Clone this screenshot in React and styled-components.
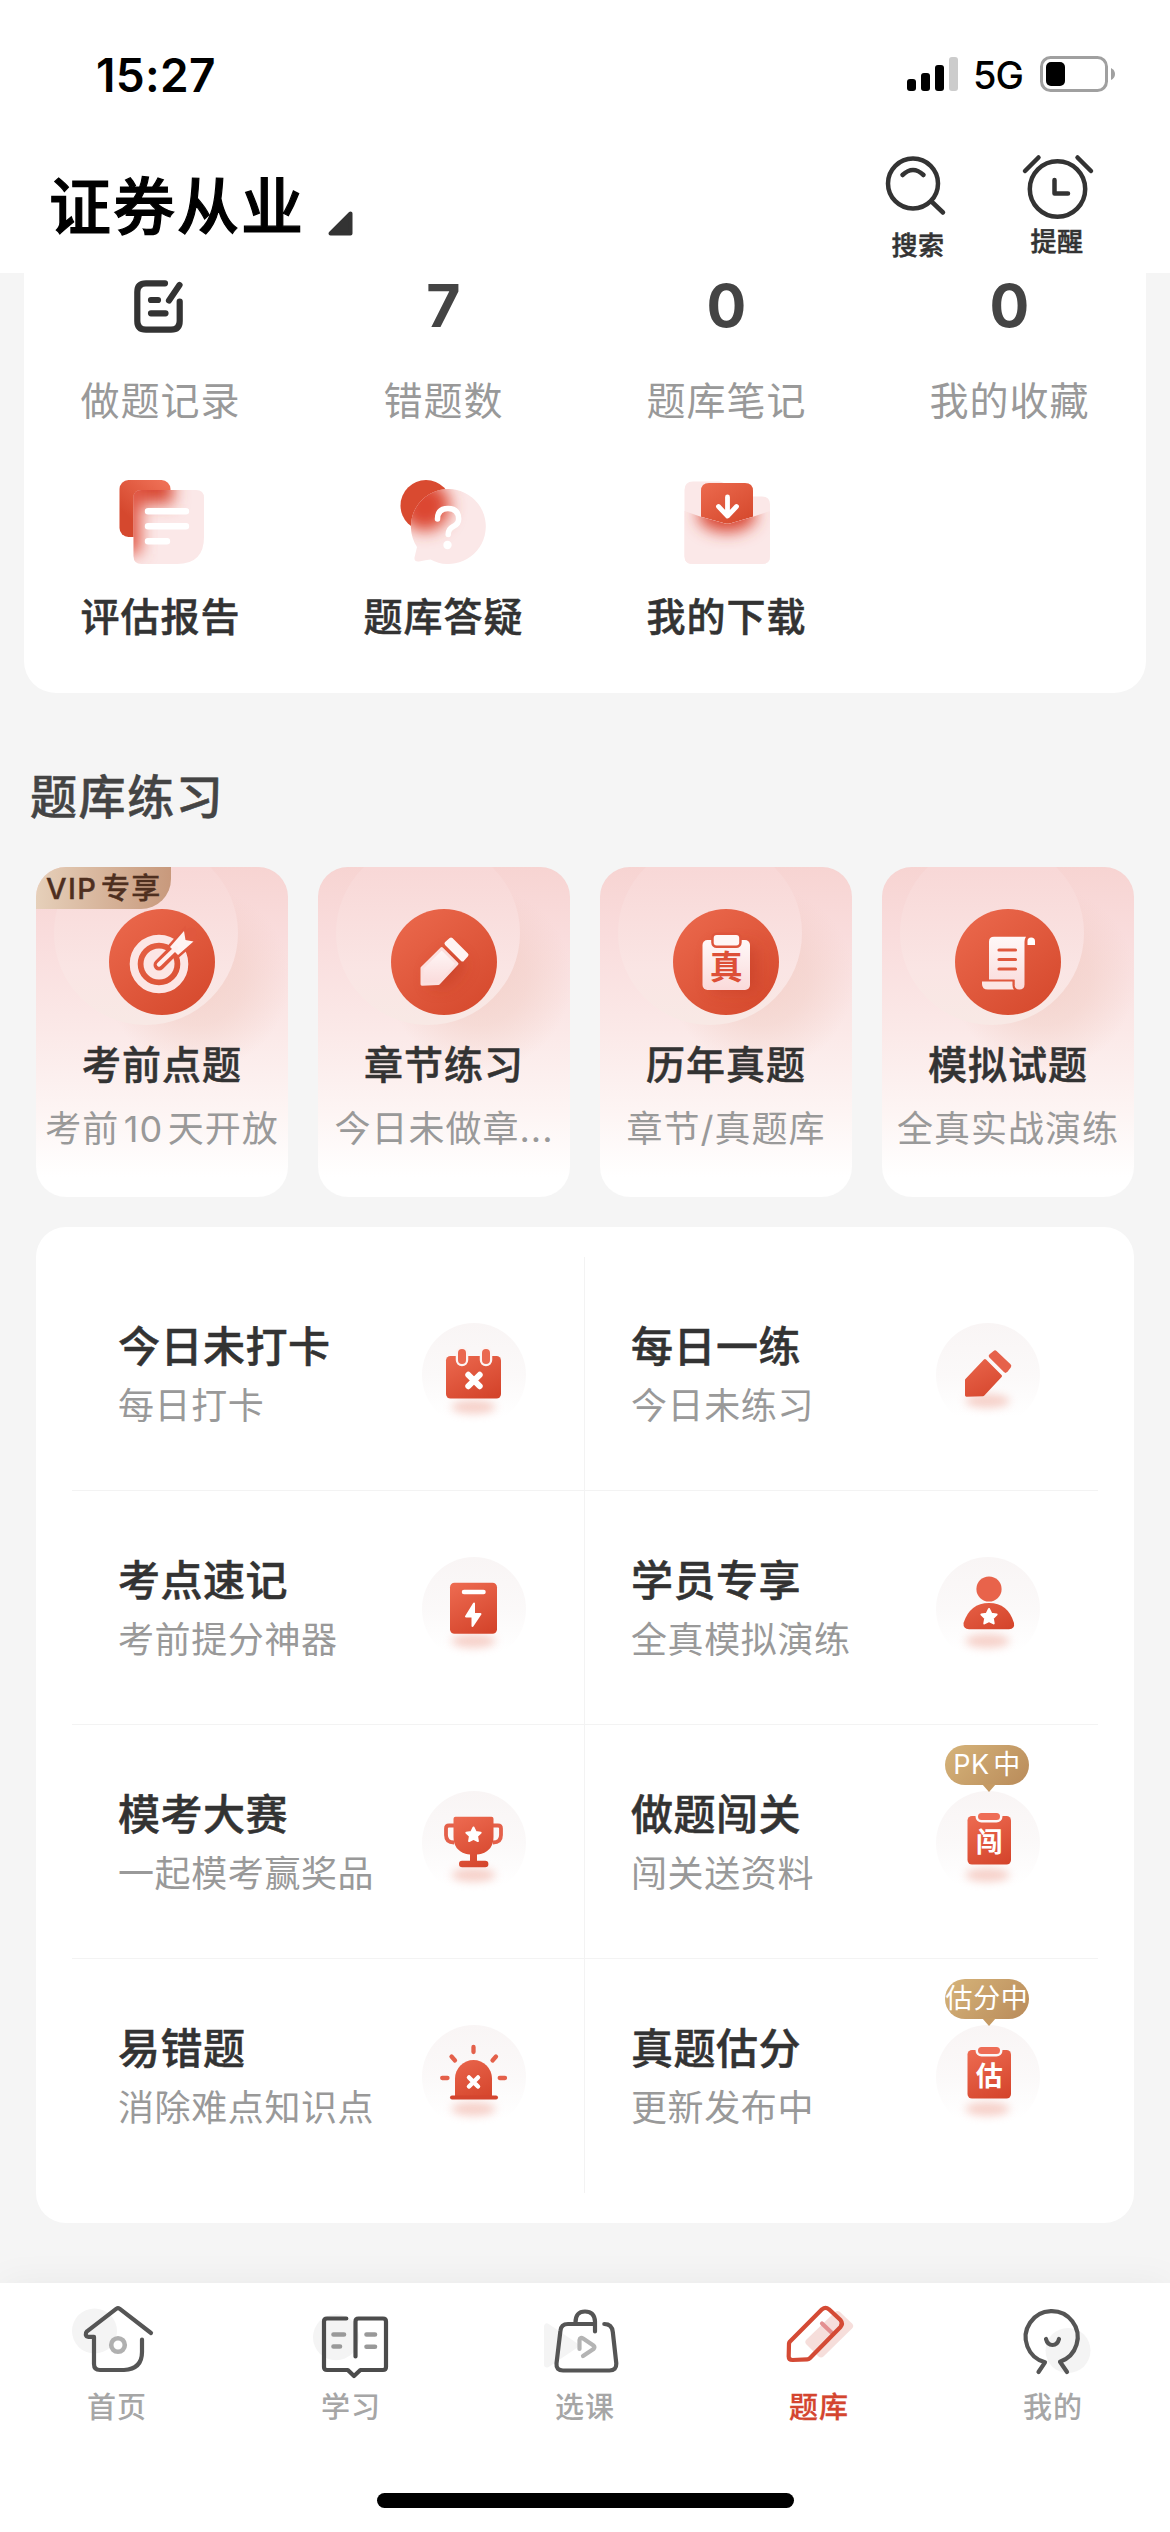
import React from 'react'
import styled, { createGlobalStyle, css } from 'styled-components'

const GlobalStyle = createGlobalStyle`
  * {
    box-sizing: border-box;
  }

  body {
    margin: 0;
    background: #f5f5f5;
    font-family: Inter, 'Noto Sans CJK SC', sans-serif;
    text-autospace: normal;
  }

  svg {
    display: block;
    flex: none;
    overflow: visible;
  }
`

/* sits between the medium and bold cuts of the CJK family */
const semibold = css`
  font-weight: 500;
  -webkit-text-stroke: 0.5px currentColor;
`

const Screen = styled.div`
  width: 1170px;
  height: 2532px;
  display: flex;
  flex-direction: column;
  overflow: hidden;
  background: #f5f5f5;
`

/* ---------- header ---------- */

const Header = styled.header`
  height: 273px;
  flex: none;
  background: #fff;
`

const StatusBar = styled.div`
  height: 148px;
  display: flex;
  align-items: center;
  justify-content: space-between;
  padding: 0 55px 0 96px;
`

const Time = styled.span`
  margin-top: 2px;
  font-size: 46px;
  font-weight: 600;
  letter-spacing: 0.3px;
  color: #000;
`

const Signals = styled.div`
  display: flex;
  align-items: center;
`

const Network = styled.span`
  margin: 2px 17px 0 14px;
  font-size: 38px;
  font-weight: 500;
  letter-spacing: -1px;
  color: #000;
`

const TitleBar = styled.div`
  display: flex;
  align-items: flex-start;
  padding: 2px 77px 0 49px;
`

const Title = styled.h1`
  ${semibold}
  margin: 23px 23px 0 0;
  font-size: 62px;
  line-height: 70px;
  letter-spacing: 2px;
  -webkit-text-stroke-width: 1.2px;
  color: #000;
`

const Caret = styled.svg`
  margin-top: 61px;
`

const Actions = styled.div`
  display: flex;
  gap: 67px;
  margin-left: auto;
`

const Action = styled.div`
  ${semibold}
  width: 72px;
  display: flex;
  flex-direction: column;
  align-items: center;
  gap: ${({ $gap }) => $gap}px;
  font-size: 26px;
  line-height: 30px;
  letter-spacing: 0.6px;
  color: #333;
`

/* ---------- statistics ---------- */

const StatsCard = styled.section`
  height: 420px;
  flex: none;
  margin: 0 24px;
  display: grid;
  grid-template-columns: repeat(4, 283px);
  grid-template-rows: 153px 1fr;
  justify-content: center;
  background: #fff;
  border-radius: 0 0 32px 32px;
`

const Stat = styled.div`
  display: flex;
  flex-direction: column;
  align-items: center;
`

const StatValue = styled.div`
  height: 65px;
  display: flex;
  align-items: center;
  font-size: 59px;
  font-weight: 700;
  color: #444;
`

const StatLabel = styled.div`
  margin-top: 38px;
  font-size: 39px;
  line-height: 50px;
  letter-spacing: 1px;
  color: #999;
`

const Tool = styled.div`
  display: flex;
  flex-direction: column;
  align-items: center;
  padding-top: 54px;
`

const ToolLabel = styled.div`
  ${semibold}
  margin-top: 28px;
  font-size: 39px;
  line-height: 50px;
  letter-spacing: 1px;
  color: #333;
`

/* ---------- practice cards ---------- */

const SectionTitle = styled.h2`
  ${semibold}
  margin: 74px 30px 0;
  font-size: 47px;
  line-height: 60px;
  letter-spacing: 1.6px;
  color: #444;
`

const Cards = styled.section`
  display: flex;
  gap: 30px;
  margin: 40px 36px 0;
`

const Card = styled.article`
  position: relative;
  isolation: isolate;
  width: 252px;
  height: 330px;
  display: flex;
  flex-direction: column;
  align-items: center;
  padding-top: 42px;
  overflow: hidden;
  border-radius: 30px;
  background:
    radial-gradient(
      circle 92px at 162px 112px,
      rgba(238, 196, 184, 0.5) 0,
      rgba(238, 196, 184, 0.36) 50%,
      rgba(242, 210, 202, 0) 100%
    ),
    linear-gradient(#f7d4d2 0%, #f9dcdc 20%, #fbe9e8 50%, #fdf5f4 75%, #fff 94%);

  /* pale halo behind the icon */
  &::before {
    content: '';
    position: absolute;
    z-index: -1;
    top: -26px;
    left: 18px;
    width: 184px;
    height: 184px;
    border-radius: 50%;
    background: linear-gradient(
      #f8d8d7 15%,
      #f9dedd 40%,
      #fae5e4 70%,
      #f8e9e5 100%
    );
  }
`

const VipTag = styled.span`
  position: absolute;
  top: 0;
  left: 0;
  width: 135px;
  height: 42px;
  padding-left: 10px;
  border-bottom-right-radius: 30px;
  background: linear-gradient(90deg, #e6d0ba, #c8997c);
  font-size: 29px;
  font-weight: 500;
  -webkit-text-stroke: 0.4px currentColor;
  line-height: 44px;
  letter-spacing: 1.4px;
  white-space: nowrap;
  color: #4e2f1f;
`

const CardTitle = styled.h3`
  ${semibold}
  margin: 25px 0 0;
  font-size: 39px;
  line-height: 50px;
  letter-spacing: 1px;
  color: #333;
`

const CardNote = styled.p`
  margin: 17px 0 0;
  font-size: 36px;
  line-height: 44px;
  letter-spacing: 1px;
  white-space: nowrap;
  color: #999;
`

/* ---------- feature list ---------- */

const Features = styled.section`
  height: 996px;
  flex: none;
  display: grid;
  grid-template-columns: 513px 513px;
  grid-template-rows: repeat(4, 234px);
  margin: 30px 36px 0;
  padding: 30px 36px;
  background: #fff;
  border-radius: 30px;
`

const Feature = styled.div`
  display: flex;
  justify-content: space-between;
  padding: 65px 58px 0 46px;
  ${({ $line }) =>
    $line &&
    css`
      border-bottom: 1px solid #f3f3f3;
    `}

  &:nth-child(odd) {
    border-right: 1px solid #f3f3f3;
  }
`

const FeatureTitle = styled.h3`
  ${semibold}
  margin: 0;
  font-size: 42px;
  line-height: 50px;
  letter-spacing: 0.5px;
  color: #333;
`

const FeatureNote = styled.p`
  margin: 11px 0 0;
  font-size: 36px;
  line-height: 46px;
  letter-spacing: 0.6px;
  color: #999;
`

const FeatureIcon = styled.div`
  position: relative;
  width: 104px;
  height: 104px;
  margin-top: 1px;
  border-radius: 50%;
  background: linear-gradient(#f9f5f5, #fbf9f9 50%, #fff 90%);
`

const Bubble = styled.span`
  position: absolute;
  top: -46px;
  left: 9px;
  width: 84px;
  height: 40px;
  border-radius: 20px;
  background: linear-gradient(135deg, #d6b47a, #b98b5a);
  font-size: 27px;
  font-weight: 400;
  line-height: 40px;
  letter-spacing: 0.6px;
  text-align: center;
  white-space: nowrap;
  color: #fff;

  &::after {
    content: '';
    position: absolute;
    top: 39px;
    left: 37px;
    border: 7px solid transparent;
    border-top: 8px solid #c59a64;
    border-bottom: 0;
  }
`

/* ---------- tab bar ---------- */

const TabBar = styled.nav`
  position: relative;
  height: 249px;
  flex: none;
  margin-top: auto;
  display: grid;
  grid-template-columns: repeat(5, 1fr);
  background: #fff;
  box-shadow: 0 0 36px rgba(0, 0, 0, 0.05);
`

const Tab = styled.div`
  display: flex;
  flex-direction: column;
  align-items: center;
  padding-top: 17px;
  font-size: 29px;
  font-weight: 500;
  line-height: 40px;
  letter-spacing: 1px;
  color: ${({ $active }) => ($active ? '#d4452f' : '#a6a6a6')};
  ${({ $active }) =>
    $active &&
    css`
      -webkit-text-stroke: 0.3px currentColor;
    `}

  span {
    margin-top: 8px;
  }
`

const HomeIndicator = styled.div`
  position: absolute;
  left: 377px;
  bottom: 24px;
  width: 417px;
  height: 15px;
  border-radius: 8px;
  background: #000;
`

/* ---------- icons ---------- */

const star = (cx, cy, r) =>
  Array.from({ length: 10 }, (_, i) => {
    const a = (Math.PI / 5) * i - Math.PI / 2
    const d = i % 2 ? r * 0.5 : r
    return `${cx + d * Math.cos(a)},${cy + d * Math.sin(a)}`
  }).join(' ')

const HiddenSvg = styled.svg`
  position: absolute;
`

const Defs = () => (
  <HiddenSvg width="0" height="0">
    <defs>
      <linearGradient id="red" x1="0" y1="1" x2="0.8" y2="0">
        <stop offset="0.3" stopColor="#d5482e" />
        <stop offset="1" stopColor="#ee6f55" />
      </linearGradient>
      <linearGradient
        id="redBox"
        gradientUnits="userSpaceOnUse"
        x1="35"
        y1="22"
        x2="62"
        y2="78"
      >
        <stop offset="0" stopColor="#ee6c52" />
        <stop offset="1" stopColor="#d4442b" />
      </linearGradient>
      <linearGradient id="disc" x1="0" y1="0" x2="0.8" y2="1">
        <stop offset="0" stopColor="#ec6a4e" />
        <stop offset="1" stopColor="#d64a2e" />
      </linearGradient>
      <linearGradient id="paper" x1="0" y1="0" x2="0" y2="1">
        <stop offset="0" stopColor="#fff8f8" />
        <stop offset="1" stopColor="#fadada" />
      </linearGradient>
      <filter id="soft" x="-50%" y="-50%" width="200%" height="200%">
        <feGaussianBlur stdDeviation="8" />
      </filter>
      <filter id="shade" x="-50%" y="-150%" width="200%" height="400%">
        <feGaussianBlur stdDeviation="4.5" />
      </filter>
      <clipPath id="sheet">
        <path d="M22.500 10H77q8 0 8 8V57q0 27-27 27H22.500q-8 0-8-8V18q0-8 8-8Z" />
      </clipPath>
      <clipPath id="chat">
        <path d="M46.500 9a37.500 37.500 0 1 1-18 70.500Q24 80 17 81.500q-5 .5-4.500-4L15 67A37.500 37.500 0 0 1 46.500 9Z" />
      </clipPath>
      <clipPath id="pocket">
        <path d="M-.5 31 15.800 36.700 40 43.500q2.500.6 5 0L68 36.700 85 31V76q0 8-8 8H7.500q-8 0-8-8Z" />
      </clipPath>
    </defs>
  </HiddenSvg>
)

const SignalIcon = () => (
  <svg width="52" height="36" viewBox="0 0 52 36">
    <rect x="0" y="23" width="9" height="12" rx="3" />
    <rect x="14" y="17" width="9" height="18" rx="3" />
    <rect x="28" y="9" width="9" height="26" rx="3" />
    <rect x="42" y="1" width="9" height="34" rx="3" fill="#ccc" />
  </svg>
)

const BatteryIcon = () => (
  <svg width="75" height="36" viewBox="0 0 75 36">
    <rect
      x="1.500"
      y="1.500"
      width="65"
      height="33"
      rx="9"
      fill="none"
      stroke="#a0a0a0"
      strokeWidth="3"
    />
    <path d="M71 12q4 2 4 6t-4 6Z" fill="#a0a0a0" />
    <rect x="6" y="6" width="19" height="24" rx="5" />
  </svg>
)

const SearchIcon = () => (
  <svg
    width="72"
    height="68"
    fill="none"
    stroke="#333"
    strokeWidth="4.500"
    strokeLinecap="round"
  >
    <circle cx="31" cy="33.500" r="25" />
    <path d="M20.500 25q10.500-10 21 0M49.500 51.500 61 62.500" />
  </svg>
)

const ClockIcon = () => (
  <svg
    width="72"
    height="68"
    fill="none"
    stroke="#333"
    strokeWidth="4.500"
    strokeLinecap="round"
    strokeLinejoin="round"
  >
    <circle cx="36.500" cy="39" r="27.700" />
    <path d="M33.500 30V43.500H47M4 21 17.500 7.500M56.500 7.500 70 21" />
  </svg>
)

const RecordIcon = () => (
  <svg
    width="54"
    height="51"
    fill="none"
    stroke="#333"
    strokeWidth="6.200"
    strokeLinecap="round"
    strokeLinejoin="round"
  >
    <path d="M31 3.300H12q-8.700 0-8.700 8.700V41q0 8.700 8.700 8.700H37q8.700 0 8.700-8.700V21.500" />
    <path d="M45.500 5 35 20.500M17 20h7M17 33.300h14.500" />
  </svg>
)

const ReportIcon = () => (
  <svg width="84" height="84">
    <rect x="0.500" y="0" width="51" height="57" rx="9" fill="url(#red)" />
    <g clipPath="url(#sheet)">
      <rect width="90" height="90" fill="#fbe8e8" />
      <rect x="-6" y="-14" width="60" height="38" fill="#d94a35" filter="url(#soft)" />
      <rect x="-12" y="-4" width="34" height="78" fill="#e25c48" filter="url(#soft)" />
    </g>
    <path
      d="M29 31.300H67M29 46.300H67M29 61.300H48"
      stroke="#fff"
      strokeWidth="6.400"
      strokeLinecap="round"
    />
  </svg>
)

const ChatIcon = () => (
  <svg width="84" height="84">
    <circle cx="24" cy="25.500" r="25.500" fill="#d94a30" />
    <g clipPath="url(#chat)">
      <rect width="90" height="90" fill="#fbe8e8" />
      <circle cx="23" cy="26" r="25" fill="#dc4630" filter="url(#soft)" />
    </g>
    <path
      d="M35.500 39q0-10.500 10.500-10.500T56.700 39q0 5-5.500 7.500-5 2.500-5 8"
      fill="none"
      stroke="#fff"
      strokeWidth="5.500"
      strokeLinecap="round"
    />
    <circle cx="45.500" cy="65" r="4.200" fill="#fff" />
  </svg>
)

const DownloadIcon = () => (
  <svg width="84" height="84">
    <path
      d="M8 1.500H34q6 0 9 7t9 8H77q8 0 8 8V76q0 8-8 8H7.500q-8 0-8-8V10q0-8.500 8.500-8.500Z"
      fill="#fbe8e8"
    />
    <path
      d="M24 3H60q8 0 8 8V36.700L45 43.500q-2.500.6-5 0L16 36.700V11q0-8 8-8Z"
      fill="url(#disc)"
    />
    <g clipPath="url(#pocket)">
      <rect x="-2" y="20" width="90" height="66" fill="#fbe8e8" />
      <ellipse cx="42" cy="35" rx="29" ry="17" fill="#d94430" filter="url(#soft)" />
    </g>
    <path
      d="M42.500 17V36M33.500 26.500l9 9.500 9-9.500"
      fill="none"
      stroke="#fff"
      strokeWidth="4.800"
      strokeLinecap="round"
      strokeLinejoin="round"
    />
  </svg>
)

const Disc = ({ children }) => (
  <svg width="106" height="106">
    <circle cx="53" cy="53" r="53" fill="url(#disc)" />
    {children}
  </svg>
)

const TargetIcon = () => (
  <Disc>
    <circle
      cx="50"
      cy="55"
      r="25.300"
      fill="none"
      stroke="#fce6e5"
      strokeWidth="8"
    />
    <circle cx="50" cy="55" r="15.500" fill="#fce6e5" />
    <path d="M50 56 82 24" stroke="#e0583e" strokeWidth="11" strokeLinecap="round" />
    <path
      d="M61 38 75 22 76.500 31 84.500 32.500 69 46Z"
      fill="#fff4f3"
      stroke="#e0583e"
      strokeWidth="5"
      paintOrder="stroke"
    />
    <path
      d="M50 55.500 67 39"
      stroke="#fff0ef"
      strokeWidth="4.500"
      strokeLinecap="round"
    />
  </Disc>
)

const ChapterIcon = () => (
  <Disc>
    <path
      d="M52 39 67 54.500 48.500 75H31V59Z"
      fill="#b9301c"
      opacity="0.5"
      filter="url(#soft)"
      transform="translate(8 2)"
    />
    <path
      d="M50.700 39.500 66 54.700 47.500 74.500 31 75.200V59Z"
      fill="url(#paper)"
      stroke="#fbe0df"
      strokeWidth="3"
      strokeLinejoin="round"
    />
    <path
      d="M60 30.500 55.500 34.500 71.500 50.500 75.500 46Z"
      fill="#fff4f3"
      stroke="#fff4f3"
      strokeWidth="4"
      strokeLinejoin="round"
    />
  </Disc>
)

const PaperIcon = () => (
  <Disc>
    <rect
      x="38"
      y="36"
      width="46"
      height="46"
      rx="5"
      fill="#b9301c"
      opacity="0.4"
      filter="url(#soft)"
    />
    <rect x="29.500" y="31" width="47.500" height="50" rx="5" fill="url(#paper)" />
    <rect
      x="40.700"
      y="26"
      width="25.500"
      height="10.500"
      rx="3"
      fill="#fff6f5"
      stroke="#de553c"
      strokeWidth="5"
      paintOrder="stroke"
    />
    <text
      x="53.300"
      y="70"
      textAnchor="middle"
      fontSize="33"
      fontWeight="700"
      fill="#dd4f37"
    >
      真
    </text>
  </Disc>
)

const ScrollIcon = () => (
  <Disc>
    <path
      d="M39 27.700H71q-1.500 2-1.500 5V75.500q0 5-5.200 5-4.800 0-4.800-5.500V71H34V32.700q0-5 5-5Z"
      fill="url(#paper)"
    />
    <path d="M72.500 36V32q0-3.500 3.700-3.500T80 32v4Z" fill="#fff" />
    <path d="M27 72.500H57.500v4q0 2.500 1.500 4H33q-6 0-6-5.500Z" fill="#fce6e4" />
    <path d="M27 71.300H58.700V76" fill="none" stroke="#e0583e" strokeWidth="1.600" />
    <path
      d="M44 41H60.500M44 50.500H60.500M44 60H60.500"
      stroke="#e0583e"
      strokeWidth="3.200"
      strokeLinecap="round"
    />
  </Disc>
)

const Glyph = ({ shadow = 84, children }) => (
  <svg width="104" height="104">
    <ellipse
      cx="51.500"
      cy={shadow}
      rx="22"
      ry="7"
      fill="#f2b9ae"
      opacity="0.65"
      filter="url(#shade)"
    />
    {children}
  </svg>
)

const Cross = ({ cx, cy, r, width }) => (
  <path
    d={`M${cx - r} ${cy - r}l${2 * r} ${2 * r}m0 ${-2 * r}l${-2 * r} ${2 * r}`}
    stroke="#fff"
    strokeWidth={width}
    strokeLinecap="round"
  />
)

const CalendarIcon = () => (
  <Glyph>
    <rect x="24" y="33" width="55" height="42.500" rx="4.500" fill="url(#redBox)" />
    <g fill="#ea6850" stroke="#fcf4f3" strokeWidth="4.500" paintOrder="stroke">
      <rect x="36" y="26" width="8" height="15" rx="4" />
      <rect x="60" y="26" width="8" height="15" rx="4" />
    </g>
    <Cross cx={52} cy={57.5} r={5.7} width={6} />
  </Glyph>
)

const PencilIcon = () => (
  <Glyph shadow={78}>
    <path
      d="M49 37.500 64.500 53 47 71.700 30.500 72.200V57Z"
      fill="url(#redBox)"
      stroke="url(#redBox)"
      strokeWidth="3"
      strokeLinejoin="round"
    />
    <path
      d="M59 29.700 55 33 69.500 47.500 73 43Z"
      fill="#e6614a"
      stroke="#e6614a"
      strokeWidth="4.500"
      strokeLinejoin="round"
    />
  </Glyph>
)

const BookIcon = () => (
  <Glyph>
    <rect x="28" y="25.700" width="47" height="51" rx="4.500" fill="url(#redBox)" />
    <path d="M42 35H61.500" stroke="#fff" strokeWidth="4.500" strokeLinecap="round" />
    <path
      d="M52 46.500 44 59.500H50.500V69L58.500 57H52Z"
      fill="#fff"
      stroke="#fff"
      strokeWidth="2"
      strokeLinejoin="round"
    />
  </Glyph>
)

const StudentIcon = () => (
  <Glyph>
    <circle cx="53" cy="32" r="12.600" fill="#e8634b" />
    <path
      d="M53 46q19 0 25 20 1 6-5 6.300H33q-6-.3-5.500-6.300Q34 46 53 46Z"
      fill="url(#redBox)"
    />
    <polygon
      points={star(53, 60, 8)}
      fill="#fff"
      stroke="#fff"
      strokeWidth="2"
      strokeLinejoin="round"
    />
  </Glyph>
)

const TrophyIcon = () => (
  <Glyph>
    <path
      d="M32 34.500H27q-3 0-3 3V44q0 7.500 8 7.500M71 34.500H76q3 0 3 3V44q0 7.500-8 7.500"
      fill="none"
      stroke="#e4604a"
      strokeWidth="3.800"
    />
    <path
      d="M33.500 25.700H69.500q2 0 2 2V46q0 13-12 16.700-2 .7-4.500.8v6.300h8.200q3.200 0 3.200 3.200t-3.200 3.300H40.200Q37 76.300 37 73t3.200-3.200H48V63.500q-2.500-.1-4.500-.8Q31.500 59 31.500 46V27.700q0-2 2-2Z"
      fill="url(#redBox)"
    />
    <polygon
      points={star(51.5, 44, 7.5)}
      fill="#fff"
      stroke="#fff"
      strokeWidth="2"
      strokeLinejoin="round"
    />
  </Glyph>
)

const AlarmIcon = () => (
  <Glyph>
    <path d="M33 72V53.500a18.500 18.500 0 0 1 37 0V72Z" fill="url(#redBox)" />
    <path d="M30 72.500H74" stroke="#d4452f" strokeWidth="4" strokeLinecap="round" />
    <path
      d="M51.500 22V27M29.500 31.500 33 35.500M74 31.500 70.500 35.500M20.200 53H25.500M77.700 53H83"
      stroke="#e4604a"
      strokeWidth="4.300"
      strokeLinecap="round"
    />
    <Cross cx={51.5} cy={57} r={4.5} width={4.5} />
  </Glyph>
)

const ClipboardIcon = ({ text }) => (
  <Glyph>
    <rect x="31.500" y="25" width="43.500" height="48.500" rx="4.500" fill="url(#redBox)" />
    <rect
      x="42"
      y="22"
      width="22"
      height="7"
      rx="3.500"
      fill="#ee6d56"
      stroke="#fbf7f7"
      strokeWidth="5"
      paintOrder="stroke"
    />
    <text
      x="53.200"
      y="60.500"
      textAnchor="middle"
      fontSize="27"
      fontWeight="700"
      fill="#fff"
    >
      {text}
    </text>
  </Glyph>
)

const TabIcon = ({ color = '#555', children }) => (
  <svg
    width="90"
    height="80"
    fill="none"
    stroke={color}
    strokeWidth="4.200"
    strokeLinecap="round"
    strokeLinejoin="round"
  >
    {children}
  </svg>
)

const HomeTabIcon = () => (
  <TabIcon>
    <circle cx="22.500" cy="31" r="22.500" fill="#f4f4f4" stroke="none" />
    <circle cx="46" cy="45" r="6.800" stroke="#b0b0b0" strokeWidth="4.600" />
    <path d="M79 33 47.500 8.700q-1.500-1-3 0L15 31.300q-1.500 1.500-1.200 3.500.5 2 2.500 2H22V64q0 6 6 6H52q18-1 18-18V39.500" />
  </TabIcon>
)

const StudyTabIcon = () => (
  <TabIcon color="#4c4c4c">
    <circle cx="30" cy="37.300" r="23" fill="#f4f4f4" stroke="none" />
    <path d="M40.300 18.500H21q-3 0-3 3V67q0 3 3 3H41.800L48 76 54.400 70H77q3 0 3-3V21.500q0-3-3-3H52.500q-3 0-3 3V56.500" />
    <path
      d="M27.500 34.500H38M27.500 46.500H34M60.500 34.500H69M60.500 46.700H69"
      stroke="#999"
      strokeWidth="4.600"
    />
  </TabIcon>
)

const CourseTabIcon = () => (
  <TabIcon>
    <path d="M7 26.500V64.500L35 45.500Z" fill="#f4f4f4" stroke="#f4f4f4" strokeWidth="6" />
    <path
      d="M39.500 49V40q.5-3.500 4-1.200L53.500 45.500q1.700 1.700 0 3.500L43 56"
      stroke="#b4b4b4"
    />
    <path d="M35.500 22.500Q35.500 11.500 45 11.500T55 21.500V31.500M54 24H28q-7 0-7.600 7L16.500 63.500Q16 70.500 23 70.500H69.500q7 0 6.800-7L72.800 32q-.8-8-8.500-8" />
  </TabIcon>
)

const BankTabIcon = () => (
  <TabIcon color="#d44a35">
    <path
      d="M61 12q2.500-2 5 0L78 23.500q2.500 2.500 0 5L49.500 56.500q-2.500 2-5 0L32.500 44.500q-2.500-2.500 0-5Z"
      fill="#f6dedb"
      stroke="none"
    />
    <path d="M48 23.500 57.500 32.500" stroke="#e39090" />
    <path d="M15.500 42 48 9.300q3.500-2.800 7 0L66.500 20q2.800 3.500 0 7L35.800 58.300q-1 1-2.500 1L18.500 60q-3.800 0-3.800-3.500L15 43.500Z" />
  </TabIcon>
)

const MineTabIcon = () => (
  <TabIcon>
    <circle cx="60" cy="50.500" r="22.500" fill="#f4f4f4" stroke="none" />
    <path d="M30.500 72 37 62.300A26 26 0 1 1 52 61.800L59 72M38 39q1.500 6 6.500 6T51 39" />
  </TabIcon>
)

/* ---------- data ---------- */

const stats = [
  { label: '做题记录', value: <RecordIcon /> },
  { label: '错题数', value: 7 },
  { label: '题库笔记', value: 0 },
  { label: '我的收藏', value: 0 },
]

const tools = [
  { label: '评估报告', Icon: ReportIcon },
  { label: '题库答疑', Icon: ChatIcon },
  { label: '我的下载', Icon: DownloadIcon },
]

const cards = [
  { title: '考前点题', note: '考前10天开放', Icon: TargetIcon, tag: 'VIP专享' },
  { title: '章节练习', note: '今日未做章...', Icon: ChapterIcon },
  { title: '历年真题', note: '章节/真题库', Icon: PaperIcon },
  { title: '模拟试题', note: '全真实战演练', Icon: ScrollIcon },
]

const features = [
  { title: '今日未打卡', note: '每日打卡', icon: <CalendarIcon /> },
  { title: '每日一练', note: '今日未练习', icon: <PencilIcon /> },
  { title: '考点速记', note: '考前提分神器', icon: <BookIcon /> },
  { title: '学员专享', note: '全真模拟演练', icon: <StudentIcon /> },
  { title: '模考大赛', note: '一起模考赢奖品', icon: <TrophyIcon /> },
  {
    title: '做题闯关',
    note: '闯关送资料',
    icon: <ClipboardIcon text="闯" />,
    bubble: 'PK中',
  },
  { title: '易错题', note: '消除难点知识点', icon: <AlarmIcon /> },
  {
    title: '真题估分',
    note: '更新发布中',
    icon: <ClipboardIcon text="估" />,
    bubble: '估分中',
  },
]

const tabs = [
  { label: '首页', Icon: HomeTabIcon },
  { label: '学习', Icon: StudyTabIcon },
  { label: '选课', Icon: CourseTabIcon },
  { label: '题库', Icon: BankTabIcon, active: true },
  { label: '我的', Icon: MineTabIcon },
]

export default function App() {
  return (
    <Screen>
      <GlobalStyle />
      <Defs />

      <Header>
        <StatusBar>
          <Time>15:27</Time>
          <Signals>
            <SignalIcon />
            <Network>5G</Network>
            <BatteryIcon />
          </Signals>
        </StatusBar>
        <TitleBar>
          <Title>证券从业</Title>
          <Caret width="25" height="25" viewBox="0 0 25 25">
            <path
              d="M22.500 2.500V22.500H2.500Z"
              fill="#333"
              stroke="#333"
              strokeWidth="4"
              strokeLinejoin="round"
            />
          </Caret>
          <Actions>
            <Action $gap={13}>
              <SearchIcon />
              搜索
            </Action>
            <Action $gap={9}>
              <ClockIcon />
              提醒
            </Action>
          </Actions>
        </TitleBar>
      </Header>

      <StatsCard>
        {stats.map(({ label, value }) => (
          <Stat key={label}>
            <StatValue>{value}</StatValue>
            <StatLabel>{label}</StatLabel>
          </Stat>
        ))}
        {tools.map(({ label, Icon }) => (
          <Tool key={label}>
            <Icon />
            <ToolLabel>{label}</ToolLabel>
          </Tool>
        ))}
      </StatsCard>

      <SectionTitle>题库练习</SectionTitle>
      <Cards>
        {cards.map(({ title, note, Icon, tag }) => (
          <Card key={title}>
            {tag && <VipTag>{tag}</VipTag>}
            <Icon />
            <CardTitle>{title}</CardTitle>
            <CardNote>{note}</CardNote>
          </Card>
        ))}
      </Cards>

      <Features>
        {features.map(({ title, note, icon, bubble }, i) => (
          <Feature key={title} $line={i < 6}>
            <div>
              <FeatureTitle>{title}</FeatureTitle>
              <FeatureNote>{note}</FeatureNote>
            </div>
            <FeatureIcon>
              {icon}
              {bubble && <Bubble>{bubble}</Bubble>}
            </FeatureIcon>
          </Feature>
        ))}
      </Features>

      <TabBar>
        {tabs.map(({ label, Icon, active }) => (
          <Tab key={label} $active={active}>
            <Icon />
            <span>{label}</span>
          </Tab>
        ))}
        <HomeIndicator />
      </TabBar>
    </Screen>
  )
}
